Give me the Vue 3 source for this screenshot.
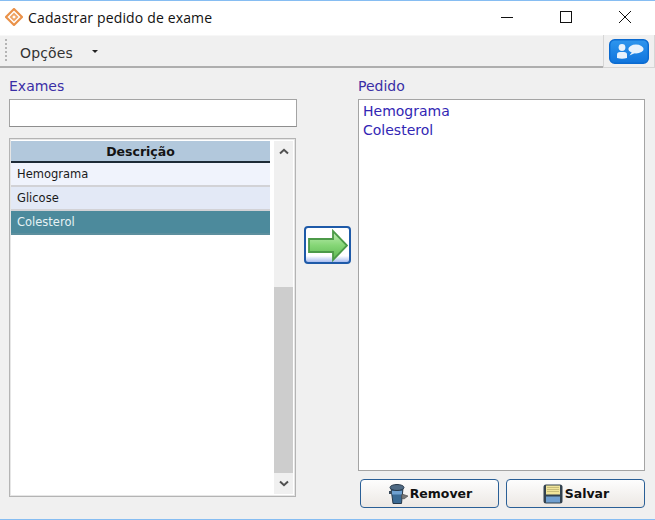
<script setup>
const rows = [
  { label: 'Hemograma', cls: 'odd' },
  { label: 'Glicose', cls: 'even' },
  { label: 'Colesterol', cls: 'sel' },
]
const pedido = ['Hemograma', 'Colesterol']
</script>

<template>
  <div class="win">
    <header class="title">
      <svg class="logo" width="18" height="18" viewBox="0 0 18 18">
        <path d="M9 1 L17 9 L9 17 L1 9 Z" fill="#fff" stroke="#ea9148" stroke-width="2.2" stroke-linejoin="round" />
        <path d="M9 4.5 L13.5 9 L9 13.5 L4.5 9 Z" fill="#f0a566" />
        <path d="M9 7.2 L10.8 9 L9 10.8 L7.2 9 Z" fill="#fff" />
      </svg>
      <span class="title-text">Cadastrar pedido de exame</span>
      <div class="controls">
        <span class="ctl"><svg width="12" height="12" viewBox="0 0 12 12"><path d="M0 6.5H12" stroke="#111" /></svg></span>
        <span class="ctl"><svg width="12" height="12" viewBox="0 0 12 12"><rect x=".5" y=".5" width="11" height="11" fill="none" stroke="#111" /></svg></span>
        <span class="ctl"><svg width="12" height="12" viewBox="0 0 12 12"><path d="M0 0L12 12M12 0L0 12" stroke="#111" /></svg></span>
      </div>
    </header>

    <div class="toolbar">
      <div class="menu-area">
        <span class="grip"></span>
        <span class="menu">Opções</span>
        <span class="caret"></span>
      </div>
      <div class="chat-area">
        <svg width="40" height="25" viewBox="0 0 40 25">
          <defs>
            <linearGradient id="bl" x1="0" y1="0" x2="0" y2="1">
              <stop offset="0" stop-color="#2f96ee" />
              <stop offset="1" stop-color="#0f74dc" />
            </linearGradient>
          </defs>
          <rect x=".7" y=".7" width="38.6" height="23.6" rx="5" fill="url(#bl)" stroke="#0a6ad0" stroke-width="1.4" />
          <circle cx="13" cy="8.5" r="3.4" fill="#e8f2fc" />
          <path d="M8 19V15.5Q8 13 11 13H15Q18 13 18 15.5V19Q13 20.5 8 19Z" fill="#e8f2fc" />
          <ellipse cx="27" cy="10" rx="7.6" ry="4.4" fill="#e8f2fc" />
          <path d="M23 13L20.5 16.5L26 14Z" fill="#e8f2fc" />
        </svg>
      </div>
    </div>

    <main class="content">
      <section class="left">
        <label class="lbl">Exames</label>
        <div class="input"></div>
        <div class="table">
          <div class="table-main">
            <div class="th">Descrição</div>
            <div v-for="r in rows" :key="r.label" class="tr" :class="r.cls">{{ r.label }}</div>
          </div>
          <div class="scroll">
            <svg class="chev" width="10" height="7" viewBox="0 0 10 7"><path d="M1 5.5L5 1.8L9 5.5" fill="none" stroke="#505050" stroke-width="2" /></svg>
            <div class="track"><div class="thumb"></div></div>
            <svg class="chev" width="10" height="7" viewBox="0 0 10 7"><path d="M1 1.5L5 5.2L9 1.5" fill="none" stroke="#505050" stroke-width="2" /></svg>
          </div>
        </div>
      </section>

      <section class="mid">
        <button class="arrow-btn">
          <svg width="41" height="33" viewBox="0 0 41 33">
            <defs>
              <linearGradient id="gr" x1="0" y1="0" x2="0" y2="1">
                <stop offset="0" stop-color="#c4eeb8" />
                <stop offset=".5" stop-color="#85d676" />
                <stop offset="1" stop-color="#5cb552" />
              </linearGradient>
            </defs>
            <path d="M2 10H26V2L40 16.5L26 31V23H2Z" fill="url(#gr)" stroke="#4c9a48" stroke-width="1.8" />
          </svg>
        </button>
      </section>

      <section class="right">
        <label class="lbl">Pedido</label>
        <div class="list">
          <div v-for="p in pedido" :key="p">{{ p }}</div>
        </div>
        <div class="actions">
          <button class="btn">
            <svg width="22" height="22" viewBox="0 0 22 22">
              <path d="M4 5H16L14.5 20.5H6Z" fill="#3a6a94" stroke="#26384a" />
              <ellipse cx="10" cy="4.5" rx="7" ry="3" fill="#4f6a84" stroke="#26384a" />
              <rect x="2" y="8" width="3" height="3" fill="#3a4a5a" />
              <rect x="5" y="8" width="10" height="3.5" fill="#6ea0d0" />
              <path d="M15 11L21 13L17 16L14.5 15Z" fill="#777" stroke="#444" stroke-width=".6" />
            </svg>
            Remover
          </button>
          <button class="btn">
            <svg width="22" height="22" viewBox="0 0 22 22">
              <rect x="1.5" y="1.5" width="19" height="19" rx="2.5" fill="#33424f" />
              <rect x="4" y="2.5" width="14" height="9" fill="#f0e49a" />
              <path d="M5 4.5H17M5 6.5H17M5 8.5H17" stroke="#c8bd78" />
              <rect x="4" y="13.5" width="14" height="6" fill="#6f9fd0" />
            </svg>
            Salvar
          </button>
        </div>
      </section>
    </main>
  </div>
</template>

<style scoped>
.win {
  width: 655px;
  height: 520px;
  box-sizing: border-box;
  display: flex;
  flex-direction: column;
  background: #f0f0f0;
  border-top: 1px solid #86bdf2;
  border-bottom: 1px solid #86bdf2;
  font-family: "DejaVu Sans", Verdana, sans-serif;
  overflow: hidden;
}
.title {
  height: 34px;
  box-sizing: border-box;
  flex: none;
  background: #fff;
  display: flex;
  align-items: center;
  padding: 0 1px 2px 5px;
}
.logo { flex: none; }
.title-text {
  margin-left: 5px;
  font-family: "Open Sans", sans-serif;
  font-size: 14px;
  letter-spacing: .15px;
  color: #111;
}
.controls { margin-left: auto; display: flex; }
.ctl {
  width: 59px;
  height: 32px;
  display: flex;
  align-items: center;
  justify-content: center;
}
.toolbar {
  height: 33px;
  flex: none;
  display: flex;
}
.menu-area {
  flex: 1;
  display: flex;
  align-items: center;
  background: #f0f0f0;
  border-bottom: 2px solid #aeaeae;
  box-shadow: inset 0 1px 0 #f7f7f7;
}
.grip {
  width: 2px;
  height: 24px;
  margin-left: 5px;
  background: repeating-linear-gradient(to bottom, #b4b4b4 0 2px, transparent 2px 4px);
}
.menu {
  margin-left: 13px;
  margin-top: 4px;
  font-size: 14px;
  letter-spacing: .15px;
  color: #333;
}
.caret {
  margin-left: 19px;
  margin-top: 1px;
  border-left: 3px solid transparent;
  border-right: 3px solid transparent;
  border-top: 3px solid #222;
}
.chat-area {
  width: 52px;
  box-sizing: border-box;
  display: flex;
  align-items: flex-start;
  justify-content: center;
  padding-top: 4px;
  border-left: 1px solid #d6d6d6;
  border-right: 1px solid #d6d6d6;
  border-bottom: 1px solid #d6d6d6;
}
.content {
  flex: 1;
  min-height: 0;
  display: grid;
  grid-template-columns: 288px 61px 287px;
  padding: 10px 0 0 9px;
}
.lbl {
  display: block;
  height: 21px;
  line-height: 16px;
  font-size: 14px;
  color: #3a2ea6;
}
.input {
  height: 28px;
  box-sizing: border-box;
  background: #fff;
  border: 1px solid #a4a4a4;
  border-bottom-color: #8e8e8e;
}
.table {
  margin-top: 11px;
  height: 359px;
  width: 287px;
  box-sizing: border-box;
  background: #fff;
  border: 1px solid #b4b4b4;
  box-shadow: inset 0 0 0 1px #e6e6e6;
  padding: 2px 2px 2px 1px;
  display: flex;
}
.table-main { flex: 1; min-width: 0; }
.th {
  height: 22px;
  box-sizing: border-box;
  background: #b2c8dc;
  border-bottom: 2px solid #1d2a36;
  font: bold 12.5px/21px "DejaVu Sans", Verdana, sans-serif;
  color: #141414;
  text-align: center;
}
.tr {
  height: 24px;
  box-sizing: border-box;
  padding-left: 6px;
  font-size: 11.5px;
  line-height: 23px;
  color: #1a1a1a;
  border-bottom: 2px solid #d2d2d6;
}
.odd { background: #f0f3fc; }
.even { background: #e3e9f6; }
.sel {
  background: #4c8a9c;
  color: #e6f2f4;
  border-bottom-color: #5c8f9e;
}
.scroll {
  width: 19px;
  flex: none;
  margin-left: 4px;
  background: #f0f0f0;
  display: flex;
  flex-direction: column;
  align-items: center;
}
.chev { flex: none; margin: 7px 0; }
.track {
  flex: 1;
  width: 100%;
  display: flex;
  flex-direction: column;
  justify-content: flex-end;
}
.thumb { height: 186px; background: #cdcdcd; }
.mid {
  display: flex;
  justify-content: flex-start;
  align-items: flex-start;
  padding: 148px 0 0 7px;
}
.arrow-btn {
  width: 47px;
  height: 38px;
  box-sizing: border-box;
  padding: 0;
  display: flex;
  align-items: center;
  justify-content: center;
  border: 2px solid #1e5aa8;
  border-radius: 4px;
  background: linear-gradient(#fff 0 82%, #a8bcf0);
}
.list {
  height: 372px;
  box-sizing: border-box;
  background: #fff;
  border: 1px solid #a4a4a4;
  padding: 2px 4px;
  font-size: 14px;
  line-height: 19px;
  color: #3226b4;
}
.actions {
  margin-top: 8px;
  padding-left: 2px;
  display: grid;
  grid-template-columns: 139px 139px;
  gap: 7px;
}
.btn {
  height: 29px;
  box-sizing: border-box;
  padding: 0;
  display: flex;
  align-items: center;
  justify-content: center;
  gap: 1px;
  border: 1px solid #2a5f96;
  border-radius: 4px;
  background: linear-gradient(#fdfdfd, #ece8e4);
  font: bold 12.5px "DejaVu Sans", Verdana, sans-serif;
  color: #111;
}
</style>
